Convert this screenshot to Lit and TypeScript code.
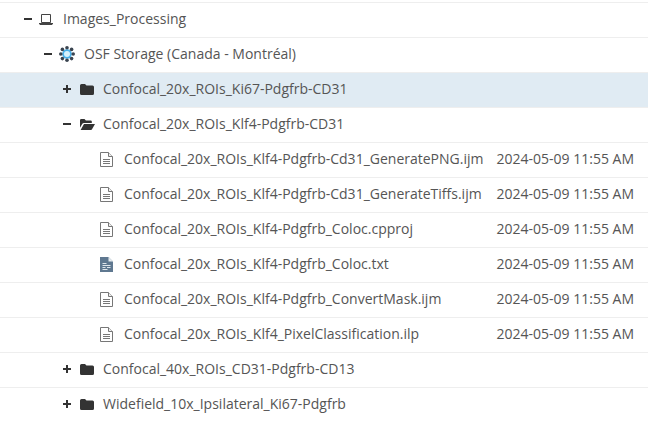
import { LitElement, html, css, svg } from "lit";
import { customElement } from "lit/decorators.js";

type Icon = "laptop" | "osf" | "closed" | "open" | "file" | "txt";
interface Row { name: string; depth: number; toggle?: "+" | "-"; icon: Icon; date?: string; selected?: boolean }

const D = "2024-05-09 11:55 AM";
const P = "Confocal_20x_ROIs_Klf4";
const rows: Row[] = [
  { name: "Images_Processing", depth: 0, toggle: "-", icon: "laptop" },
  { name: "OSF Storage (Canada - Montréal)", depth: 1, toggle: "-", icon: "osf" },
  { name: "Confocal_20x_ROIs_Ki67-Pdgfrb-CD31", depth: 2, toggle: "+", icon: "closed", selected: true },
  { name: `${P}-Pdgfrb-CD31`, depth: 2, toggle: "-", icon: "open" },
  { name: `${P}-Pdgfrb-Cd31_GeneratePNG.ijm`, depth: 3, icon: "file", date: D },
  { name: `${P}-Pdgfrb-Cd31_GenerateTiffs.ijm`, depth: 3, icon: "file", date: D },
  { name: `${P}-Pdgfrb_Coloc.cpproj`, depth: 3, icon: "file", date: D },
  { name: `${P}-Pdgfrb_Coloc.txt`, depth: 3, icon: "txt", date: D },
  { name: `${P}-Pdgfrb_ConvertMask.ijm`, depth: 3, icon: "file", date: D },
  { name: `${P}_PixelClassification.ilp`, depth: 3, icon: "file", date: D },
  { name: "Confocal_40x_ROIs_CD31-Pdgfrb-CD13", depth: 2, toggle: "+", icon: "closed" },
  { name: "Widefield_10x_Ipsilateral_Ki67-Pdgfrb", depth: 2, toggle: "+", icon: "closed" },
];

const icons: Record<Icon, unknown> = {
  laptop: svg`<svg class="ico" width="14" height="11" viewBox="0 0 14 11"><path d="M2.500 .5h9v8h-9z" fill="none" stroke="#444" stroke-width="1"/><path d="M0 9h14v.5l-1 1.500H1L0 9.500z" fill="#444"/></svg>`,
  osf: svg`<svg class="ico" width="16" height="16" viewBox="0 0 16 16"><circle cx="8" cy="8" r="4.800" fill="#48b0ea"/><circle cx="8" cy="8" r="3" fill="#d6f1fc"/>${[[8,1.800],[12.600,3.400],[14.200,8],[12.600,12.600],[8,14.200],[3.400,12.600],[1.800,8],[3.400,3.400]].map(([x,y])=>svg`<circle cx="${x}" cy="${y}" r="1.800" fill="#3a4450"/>`)}</svg>`,
  closed: svg`<svg class="ico" width="14" height="11" viewBox="0 0 14 11"><path d="M1.500 0h3.500l1.500 1.500h6A1.500 1.500 0 0 1 14 3v6.500a1.500 1.500 0 0 1-1.500 1.500h-11A1.500 1.500 0 0 1 0 9.500V1.500A1.500 1.500 0 0 1 1.500 0z" fill="#333"/></svg>`,
  open: svg`<svg class="ico" width="15" height="11" viewBox="0 0 15 11"><path d="M0 1.200A1.200 1.200 0 0 1 1.200 0h3.300l1.400 1.600h4.900a1 1 0 0 1 1 1V4H4a2 2 0 0 0-1.800 1.100L0 8.800z" fill="#333"/><path d="M4 5h11l-3 5.300a1.200 1.200 0 0 1-1 .7H.6z" fill="#333"/></svg>`,
  file: svg`<svg class="ico" width="13" height="15" viewBox="0 0 13 15"><path d="M.5 .5h8l4 4v10H.5z" fill="#fff" stroke="#777" stroke-width="1"/><path d="M8.500 .5v4h4" fill="#eee" stroke="#777"/><path d="M3 7.500h7M3 9.500h7M3 11.500h7" stroke="#777" stroke-width="1"/></svg>`,
  txt: svg`<svg class="ico" width="13" height="15" viewBox="0 0 13 15"><path d="M0 0h8.500L13 4.500V15H0z" fill="#5f7890"/><path d="M8.500 0v4.500H13z" fill="#e6ebef"/><path d="M2.500 6.500h4M2.500 8.500h8M2.500 10.500h3M7 10.500h3.500M2.500 12.500h5" stroke="#dfe6ec" stroke-width="1"/></svg>`,
};

@customElement("app-root")
export class AppRoot extends LitElement {
  static styles = css`
    :host { display: block; width: 648px; height: 421px; overflow: hidden; background: #fff; padding-top: 2px; box-sizing: border-box;
      font-family: "Open Sans", sans-serif; font-size: 14px; color: #555; }
    .row { height: 35px; box-sizing: border-box; border-top: 1px solid #eee; display: flex; align-items: center; padding-right: 14px; padding-bottom: 2px; }
    .row.selected { background: #e0ebf3; }
    .d0 { padding-left: 24px; }
    .d1 { padding-left: 44px; }
    .d2 { padding-left: 63px; }
    .d3 { padding-left: 100px; }
    .toggle { width: 8px; height: 8px; margin-right: 8px; position: relative; flex: none; }
    .toggle::before { content: ""; position: absolute; left: 0; right: 0; top: 3px; height: 2px; background: #333; }
    .toggle.plus::after { content: ""; position: absolute; top: 0; bottom: 0; left: 3px; width: 2px; background: #333; }
    .slot { flex: none; display: flex; }
    .d0 .slot { margin-right: 10px; margin-left: -1px; }
    .d1 .slot { margin-right: 9px; margin-left: -1px; }
    .d2 .slot { margin-left: 1px; margin-right: 8px; width: 15px; }
    .d3 .slot { margin-right: 11px; }
    .ico { display: block; }
    .name { flex: 1; white-space: nowrap; margin-bottom: 2px; }
    .date { white-space: nowrap; margin-bottom: 2px; }
  `;
  render() {
    return rows.map((r) => html`
      <div class="row d${r.depth} ${r.selected ? "selected" : ""}">
        ${r.toggle ? html`<span class="toggle ${r.toggle === "+" ? "plus" : ""}"></span>` : ""}
        <span class="slot">${icons[r.icon]}</span>
        <span class="name">${r.name}</span>
        ${r.date ? html`<span class="date">${r.date}</span>` : ""}
      </div>`);
  }
}
